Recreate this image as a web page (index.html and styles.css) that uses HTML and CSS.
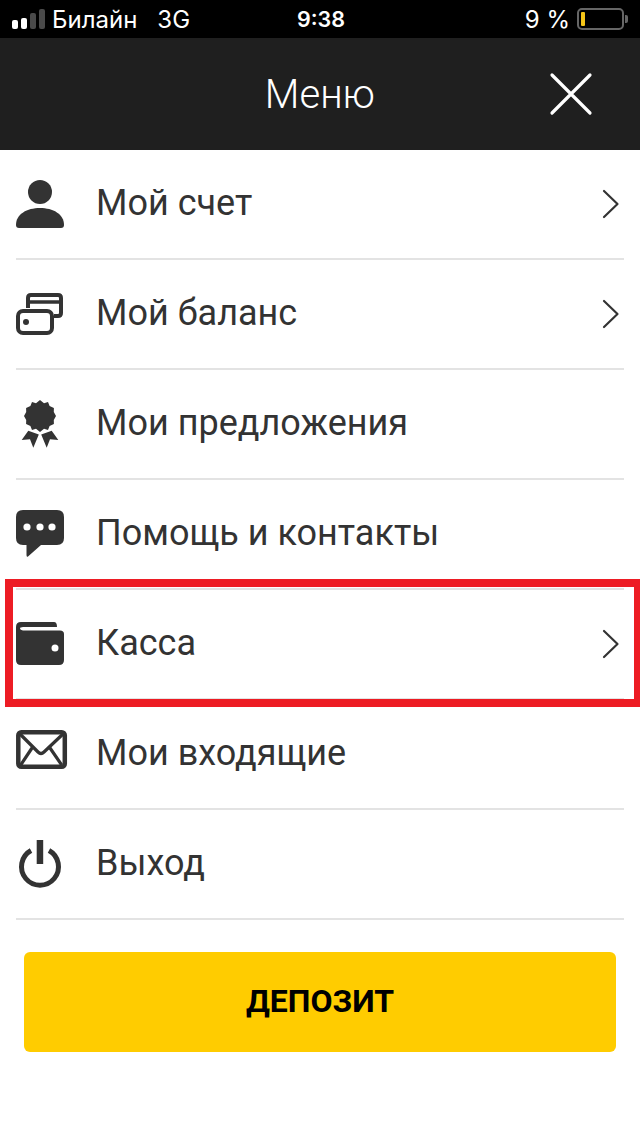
FILE: index.html
```html
<!DOCTYPE html>
<html lang="en">
<head>
    <meta charset="UTF-8">
    <meta name="viewport" content="width=device-width, initial-scale=1.0">
    <title>Меню</title>
    <link rel="stylesheet" href="styles.css">
</head>
<body>
    <div class="status-bar">
        <div class="status-left">
            <div class="signal">
                <span class="bar bar-on"></span>
                <span class="bar bar-on bar-2"></span>
                <span class="bar bar-3"></span>
                <span class="bar bar-4"></span>
            </div>
            <span class="carrier">Билайн</span>
            <span class="network">3G</span>
        </div>
        <div class="status-time">9:38</div>
        <div class="status-right">
            <span class="percent">9 %</span>
            <div class="battery"><div class="battery-level"></div></div>
            <div class="battery-cap"></div>
        </div>
    </div>

    <div class="header">
        <div class="header-title">Меню</div>
        <svg class="close-icon" width="44" height="44" viewBox="0 0 44 44">
            <path d="M3 3L41 41M41 3L3 41" stroke="#fff" stroke-width="3.2" stroke-linecap="round" fill="none"/>
        </svg>
    </div>

    <div class="menu">
        <div class="menu-row">
            <svg class="menu-icon" width="48" height="48" viewBox="0 0 48 48">
                <circle cx="24" cy="12" r="12" fill="#333"/>
                <path d="M0 45C0 34 11 28 24 28S48 34 48 45Q48 48 45 48H3Q0 48 0 45Z" fill="#333"/>
            </svg>
            <span class="menu-label">Мой счет</span>
            <svg class="chevron" width="18" height="30" viewBox="0 0 18 30"><path d="M2 2L15.5 15L2 28" stroke="#333" stroke-width="2.2" stroke-linecap="round" stroke-linejoin="round" fill="none"/></svg>
        </div>
        <div class="menu-row">
            <svg class="menu-icon" width="48" height="48" viewBox="0 0 48 48">
                <path d="M12 18V8Q12 5 15 5H42Q45 5 45 8V23Q45 26 42 26H38" stroke="#333" stroke-width="4" fill="none"/>
                <path d="M12 12H45" stroke="#333" stroke-width="3.6"/>
                <rect x="2" y="21" width="34" height="22" rx="5" stroke="#333" stroke-width="4" fill="#fff"/>
                <circle cx="10" cy="32" r="3" fill="#333"/>
            </svg>
            <span class="menu-label">Мой баланс</span>
            <svg class="chevron" width="18" height="30" viewBox="0 0 18 30"><path d="M2 2L15.5 15L2 28" stroke="#333" stroke-width="2.2" stroke-linecap="round" stroke-linejoin="round" fill="none"/></svg>
        </div>
        <div class="menu-row">
            <svg class="menu-icon" width="48" height="48" viewBox="0 0 48 48">
                <path d="M24 0L28 3.2L32 2.1L33.6 5.9L37.9 7.9L37.8 11.9L40 16L37.8 20.1L37.9 24.1L33.6 26.1L32 29.9L28 28.8L24 32L20 28.8L16 29.9L14.4 26.1L10.1 24.1L10.2 20.1L8 16L10.2 11.9L10.1 7.9L14.4 5.9L16 2.1L20 3.2Z" fill="#333"/>
                <path d="M5.7 40L12.3 30.7L22.8 34.5L17.3 47.7L14 39.3Z" fill="#333"/>
                <path d="M42.3 40L35.7 30.7L25.2 34.5L30.7 47.7L34 39.3Z" fill="#333"/>
            </svg>
            <span class="menu-label">Мои предложения</span>
        </div>
        <div class="menu-row">
            <svg class="menu-icon" width="48" height="48" viewBox="0 0 48 48">
                <path d="M7 0H41Q48 0 48 7V28Q48 35 41 35H25L12 46.500Q10.500 47.500 10.500 45V35H7Q0 35 0 28V7Q0 0 7 0Z" fill="#333"/>
                <circle cx="11" cy="17" r="3.6" fill="#fff"/>
                <circle cx="24" cy="17" r="3.6" fill="#fff"/>
                <circle cx="36" cy="17" r="3.6" fill="#fff"/>
            </svg>
            <span class="menu-label">Помощь и контакты</span>
        </div>
        <div class="menu-row">
            <svg class="menu-icon" width="48" height="48" viewBox="0 0 48 48">
                <path d="M5 2H38Q41 2 41 7H7Q4 7 4 8.500T7 10.500H44Q48 10.500 48 14V40Q48 45 43 45H5Q0 45 0 40V7Q0 2 5 2Z" fill="#333"/>
                <circle cx="39" cy="28" r="3.500" fill="#fff"/>
            </svg>
            <span class="menu-label">Касса</span>
            <svg class="chevron" width="18" height="30" viewBox="0 0 18 30"><path d="M2 2L15.5 15L2 28" stroke="#333" stroke-width="2.2" stroke-linecap="round" stroke-linejoin="round" fill="none"/></svg>
        </div>
        <div class="menu-row">
            <svg class="menu-icon icon-wide" width="52" height="48" viewBox="0 0 52 48">
                <rect x="2.300" y="2.300" width="46.500" height="34.500" rx="3" stroke="#333" stroke-width="4.500" fill="none"/>
                <path d="M4 4L22 22Q25 25 28 22L47 4M4.700 35L16 18M45.700 35L34 18" stroke="#333" stroke-width="3.200" fill="none"/>
            </svg>
            <span class="menu-label">Мои входящие</span>
        </div>
        <div class="menu-row">
            <svg class="menu-icon" width="48" height="48" viewBox="0 0 48 48">
                <path d="M15 10.500A18.500 18.500 0 1 0 33 10.500" stroke="#333" stroke-width="5" fill="none"/>
                <rect x="20.700" y="0" width="6.500" height="24" fill="#333"/>
            </svg>
            <span class="menu-label">Выход</span>
        </div>
    </div>

    <div class="deposit-wrap">
        <div class="deposit-btn">ДЕПОЗИТ</div>
    </div>

    <div class="highlight"></div>
</body>
</html>
```

FILE: styles.css
```css
body {
    margin: 0;
    width: 640px;
    height: 1131px;
    background: #fff;
    font-family: 'Roboto', sans-serif;
    position: relative;
    overflow: hidden;
}

/* Status bar */
.status-bar {
    height: 38px;
    background: #000;
    color: #fff;
    display: flex;
    align-items: center;
    font-family: 'Inter', 'Liberation Sans', sans-serif;
    font-size: 24px;
    position: relative;
}

.status-left {
    display: flex;
    align-items: center;
    padding-left: 12px;
}

.signal {
    display: flex;
    align-items: flex-end;
    gap: 3px;
    height: 20px;
    margin-right: 7px;
}

.bar {
    width: 6px;
    border-radius: 2px;
    background: #4a4a4a;
    height: 20px;
}

.bar-on {
    background: #fff;
    height: 9px;
}

.bar-2 { height: 11px; }
.bar-3 { height: 16px; }

.network {
    margin-left: 20px;
}

.status-time {
    position: absolute;
    left: 297px;
    font-weight: 600;
    font-size: 21.5px;
}

.status-right {
    margin-left: auto;
    display: flex;
    align-items: center;
    padding-right: 12px;
}

.percent {
    margin-right: 7px;
}

.battery {
    border: 2px solid #666;
    border-radius: 5px;
    padding: 2px;
    box-sizing: border-box;
    width: 47px;
    height: 22px;
}

.battery-level {
    width: 4px;
    height: 100%;
    background: #f5c518;
    border-radius: 1px;
}

.battery-cap {
    width: 3px;
    height: 8px;
    background: #666;
    border-radius: 0 2px 2px 0;
    margin-left: 1px;
}

/* Header */
.header {
    height: 112px;
    background: #1f1f1f;
    color: #fff;
    display: flex;
    align-items: center;
    justify-content: center;
    position: relative;
}

.header-title {
    font-size: 40px;
    font-weight: 300;
}

.close-icon {
    position: absolute;
    left: 549px;
    top: 34px;
}

/* Menu list */
.menu {
    padding: 0 16px;
}

.menu-row {
    height: 110px;
    box-sizing: border-box;
    border-bottom: 2px solid #e3e3e3;
    display: flex;
    align-items: center;
    color: #333;
}

.menu-icon {
    flex: none;
    margin-right: 32px;
}

.icon-wide {
    margin-right: 28px;
}

.menu-label {
    font-size: 36px;
    flex: 1;
    margin-top: -2px;
}

.chevron {
    flex: none;
    margin-right: 4px;
}

/* Deposit button */
.deposit-wrap {
    padding: 32px 24px 0;
}

.deposit-btn {
    height: 100px;
    background: #ffcc00;
    border-radius: 6px;
    display: flex;
    align-items: center;
    justify-content: center;
    color: #000;
    font-size: 32px;
    font-weight: 700;
    box-sizing: border-box;
    padding-bottom: 2px;
}

/* Red annotation frame */
.highlight {
    position: absolute;
    left: 5px;
    top: 579px;
    width: 635px;
    height: 128px;
    box-sizing: border-box;
    border: 8px solid #ed1c24;
    border-right-width: 6px;
}
```
